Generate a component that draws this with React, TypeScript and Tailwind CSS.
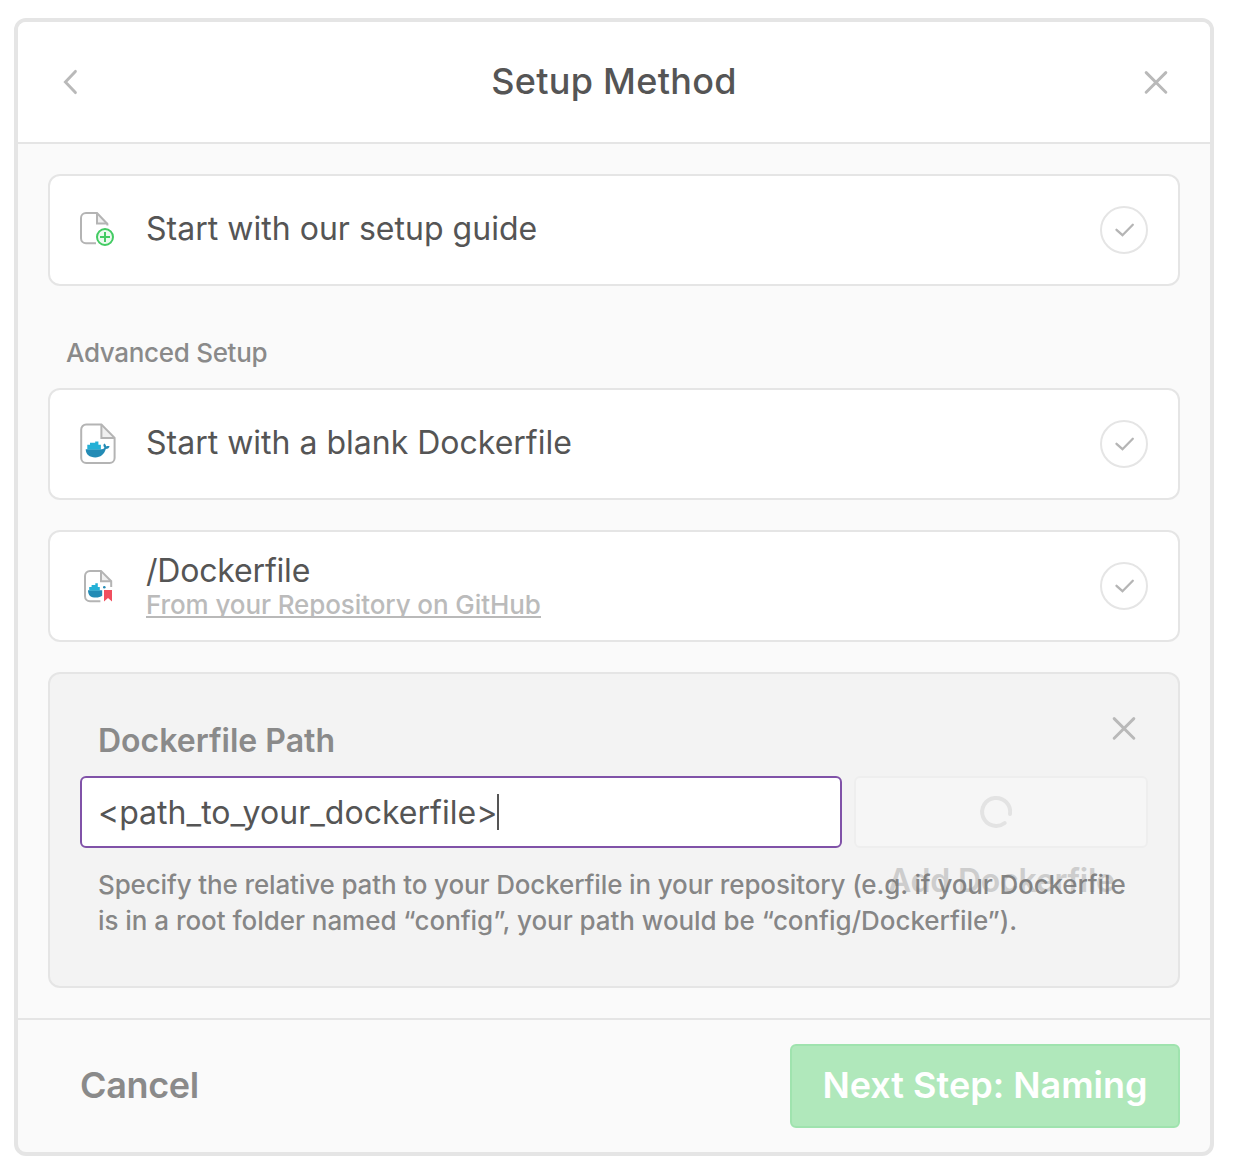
import type { ReactNode } from "react";

function CloseIcon() {
  return (
    <svg className="size-6 shrink-0" viewBox="0 0 24 24" fill="none" stroke="#b9b9b9" strokeWidth="2.9" strokeLinecap="round">
      <path d="M2.200 2.600 21.800 22.200M21.800 2.600 2.200 22.200" />
    </svg>
  );
}

function BackIcon() {
  return (
    <svg className="h-[26px] w-4 shrink-0" viewBox="0 0 16 26" fill="none" stroke="#b9b9b9" strokeWidth="2.9" strokeLinecap="round">
      <path d="M13.400 2.400 3.400 13 13.400 23.600" />
    </svg>
  );
}

function GuideIcon() {
  return (
    <svg className="h-9 w-9" viewBox="0 0 36 36" fill="none" strokeWidth="2">
      <path d="M17.400 2V12H27.200Z" fill="#f0f0f0" />
      <path d="M16 31.200H6a5 5 0 0 1-5-5V6a5 5 0 0 1 5-5H17L27.400 12V13.600" stroke="#b4b4b4" />
      <path d="M17 1V11.600H27.400" stroke="#b4b4b4" />
      <circle cx="25" cy="25" r="10" fill="#fff" />
      <circle cx="25" cy="25" r="8" fill="#ecfaef" stroke="#43cb63" />
      <path d="M25 20v10M20 25h10" stroke="#43cb63" />
    </svg>
  );
}

function BlankDockerfileIcon() {
  return (
    <svg className="h-[42px] w-9" viewBox="0 0 36 42" fill="none" stroke="#b4b4b4" strokeWidth="2">
      <path d="M21.400 2V14.800H34.400Z" fill="#f0f0f0" stroke="none" />
      <path d="M21.400 1.600H6.200a5 5 0 0 0-5 5v28.400a5 5 0 0 0 5 5h23.400a5 5 0 0 0 5-5V14.900Z" />
      <path d="M21.400 1.600V14.900H34.600" />
      <g stroke="none">
        <path d="M5.700 26.300H22c1.200 0 2-.6 2.400-1.700-1.200-1.400-1.300-2.800-.2-4.100 1.200.8 1.800 1.700 1.900 2.900 1.200-.4 2.400-.4 3.600.1-.8 1.700-2.100 2.500-3.900 2.500-1.800 5.500-5.200 8.400-10.500 8.400-5.900 0-9.400-2.600-9.600-8.100Z" fill="#238bb5" />
        <path d="M7.300 26.400V21.800h2.700v-2h5.200v-1.400h3.200v3.400h2.500v4.600Z" fill="#24b0d6" />
      </g>
    </svg>
  );
}

function RepoDockerfileIcon() {
  return (
    <svg className="ml-1 h-[34px] w-[30px]" viewBox="0 0 30 34" fill="none" stroke="#b4b4b4" strokeWidth="2">
      <path d="M17 2V12.200H27.200Z" fill="#f0f0f0" stroke="none" />
      <path d="M16.400 32.200H6a5 5 0 0 1-5-5V6.900a5 5 0 0 1 5-5H17L27.200 12.200V18" />
      <path d="M17 1.900V12.200H27.200" />
      <path d="M4 21.200h14.200v5.600c-1.600 1.200-3.600 1.800-6.400 1.800-4.800 0-7.800-2.200-7.800-7.400Z" fill="#238bb5" stroke="none" />
      <path d="M5.200 21.400v-3.300h2.400v-2h3.700v-1.800h2.500v3.800h2v3.300Z" fill="#24b0d6" stroke="none" />
      <circle cx="20.300" cy="18.300" r="1.300" fill="#238bb5" stroke="none" />
      <path d="M20 21h8v11.500l-4-3.400-4 3.400Z" fill="#f04f5f" stroke="none" />
    </svg>
  );
}

function CheckBadge() {
  return (
    <span className="flex size-12 shrink-0 items-center justify-center rounded-full border-2 border-[#e5e5e5]">
      <svg className="size-6" viewBox="0 0 24 24" fill="none" stroke="#b5b5b5" strokeWidth="2.3" strokeLinecap="round">
        <path d="M4.500 11.800 10.500 17.200 20.800 6.800" />
      </svg>
    </span>
  );
}

function MethodCard({ icon, children }: { icon: ReactNode; children: ReactNode }) {
  return (
    <div className="flex h-28 items-center rounded-xl border-2 border-[#e5e5e5] bg-white px-[30px]">
      <div className="flex w-[66px] shrink-0 items-center">{icon}</div>
      <div className="flex-1 text-[32px] leading-10 text-[#555]">{children}</div>
      <CheckBadge />
    </div>
  );
}

export default function App() {
  return (
    <main className="h-[1173px] bg-white pt-[18px] pl-[14px] font-['Inter',sans-serif]">
      <section className="flex h-[1138px] w-[1200px] flex-col overflow-hidden rounded-xl border-4 border-[#e5e5e5] bg-[#fafafa]">
        <header className="flex h-[122px] shrink-0 items-center justify-between border-b-2 border-[#e5e5e5] bg-white pr-[42px] pl-11">
          <button className="flex w-6"><BackIcon /></button>
          <h1 className="-mt-0.5 mr-0.5 text-4xl font-medium tracking-[0.27px] text-[#555]">Setup Method</h1>
          <button><CloseIcon /></button>
        </header>

        <div className="flex flex-1 flex-col px-[30px] pt-[30px]">
          <MethodCard icon={<GuideIcon />}>
            <p className="pb-0.5 tracking-[0.02px]">Start with our setup guide</p>
          </MethodCard>

          <h2 className="mt-[49px] mb-[17px] ml-[18px] text-[26px] leading-9 font-medium tracking-[-0.31px] text-[#8a8a8a]">
            Advanced Setup
          </h2>

          <MethodCard icon={<BlankDockerfileIcon />}>
            <p className="pb-0.5">Start with a blank Dockerfile</p>
          </MethodCard>

          <div className="mt-[30px]">
            <MethodCard icon={<RepoDockerfileIcon />}>
              <p className="tracking-[-0.18px]">/Dockerfile</p>
              <a className="-mt-px mb-[3px] block h-[28px] w-fit overflow-hidden border-b-2 border-[#b9b9b9] text-[26px] leading-[30px] font-medium tracking-[-0.1px] text-[#bbb]">
                From your Repository on GitHub
              </a>
            </MethodCard>
          </div>

          <div className="mt-[30px] h-[316px] rounded-xl border-2 border-[#e5e5e5] bg-[#f3f3f3] px-[30px]">
            <div className="flex h-[102px] justify-between pr-3 pl-[18px]">
              <label className="pt-[47px] text-[32px] leading-10 font-semibold text-[#8a8a8a]">Dockerfile Path</label>
              <button className="mt-[42px] h-6"><CloseIcon /></button>
            </div>
            <div className="flex h-[72px] gap-3">
              <div className="flex w-[762px] items-center rounded-[6px] border-2 border-[#8052a8] bg-white pl-4">
                <span className="pt-0.5 text-[32px] leading-10 tracking-[0.02px] text-[#555]">&lt;path_to_your_dockerfile&gt;</span>
                <span className="h-9 w-0.5 bg-[#555]" />
              </div>
              <button className="relative flex w-[294px] items-center justify-center rounded-[6px] border-2 border-[#eee] bg-[#f6f6f6]">
                <svg className="mr-[10px] size-9" viewBox="0 0 36 36" fill="none" stroke="#e3e3e3" strokeWidth="4" strokeLinecap="round">
                  <path d="M32 20A14 14 0 1 0 26.700 29" />
                </svg>
                <span className="absolute top-[83px] left-[32px] text-[32px] leading-10 font-semibold tracking-[-0.23px] whitespace-nowrap text-[#cdcdcd]">
                  Add Dockerfile
                </span>
              </button>
            </div>
            <p className="relative mt-[19px] pl-[18px] text-[26px] leading-9 font-medium whitespace-nowrap text-[#727272]/85">
              <span className="tracking-[-0.14px]">
                Specify the relative path to your Dockerfile in your repository (e.g. if your Dockerfile
              </span>
              <br />
              <span className="tracking-[-0.05px]">
                is in a root folder named “config”, your path would be “config/Dockerfile”).
              </span>
            </p>
          </div>
        </div>

        <footer className="flex h-[134px] shrink-0 items-center justify-between border-t-2 border-[#e5e5e5] pr-[30px] pl-[62px]">
          <button className="pb-0.5 text-4xl font-semibold tracking-[-0.35px] text-[#8a8a8a]">Cancel</button>
          <button className="h-[84px] w-[390px] rounded-[6px] border-2 border-[#9fe3ae] bg-[#b0e8bb] pb-0.5 text-4xl font-semibold text-white">
            Next Step: Naming
          </button>
        </footer>
      </section>
    </main>
  );
}
